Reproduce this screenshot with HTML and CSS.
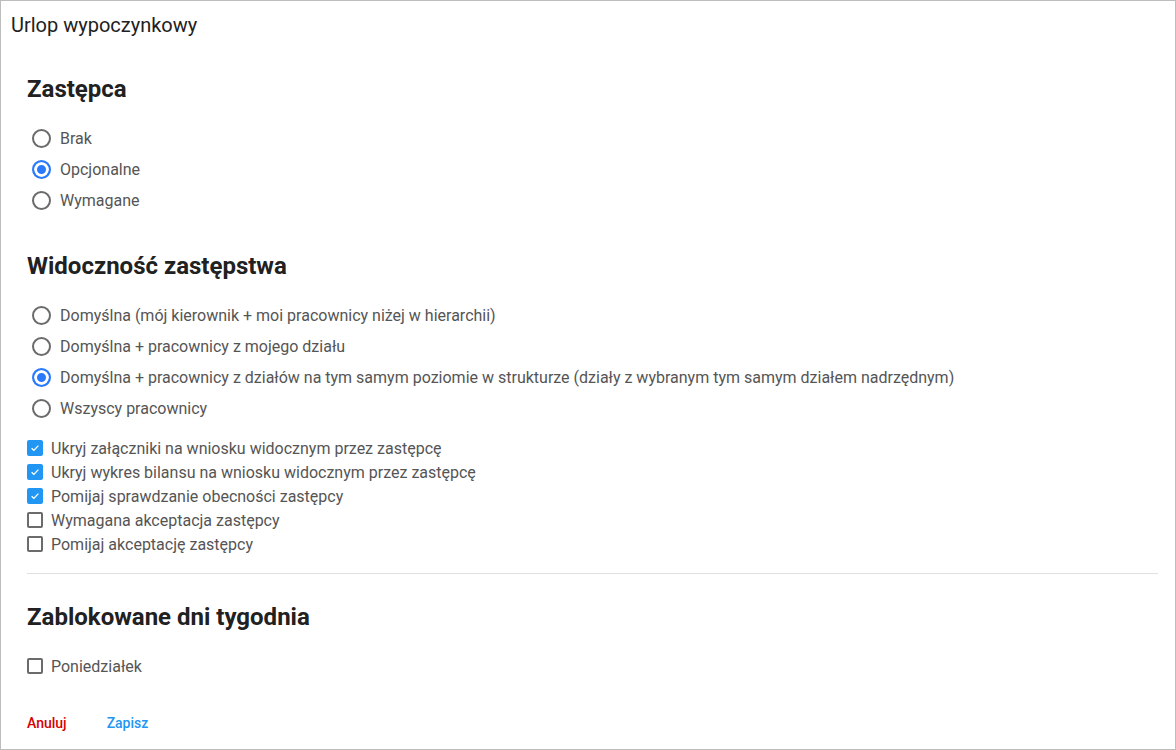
FILE: index.html
```html
<!DOCTYPE html>
<html lang="pl">
<head>
  <meta charset="UTF-8" />
  <meta name="viewport" content="width=device-width, initial-scale=1.0"/>
  <title>Urlop wypoczynkowy</title>
  <link rel="stylesheet" href="styles.css">
</head>
<body>

<div class="card">
  <div class="card-title">Urlop wypoczynkowy</div>

  <div class="card-body">
    <h2 class="first">Zastępca</h2>
    <div class="radio-group">
      <label class="radio"><input type="radio" name="zastepca"><span>Brak</span></label>
      <label class="radio"><input type="radio" name="zastepca" checked><span>Opcjonalne</span></label>
      <label class="radio"><input type="radio" name="zastepca"><span>Wymagane</span></label>
    </div>

    <h2>Widoczność zastępstwa</h2>
    <div class="radio-group">
      <label class="radio"><input type="radio" name="widocznosc"><span>Domyślna (mój kierownik + moi pracownicy niżej w hierarchii)</span></label>
      <label class="radio"><input type="radio" name="widocznosc"><span>Domyślna + pracownicy z mojego działu</span></label>
      <label class="radio"><input type="radio" name="widocznosc" checked><span>Domyślna + pracownicy z działów na tym samym poziomie w strukturze (działy z wybranym tym samym działem nadrzędnym)</span></label>
      <label class="radio"><input type="radio" name="widocznosc"><span>Wszyscy pracownicy</span></label>
    </div>

    <div class="check-group">
      <label class="check"><input type="checkbox" checked><span class="box"><svg viewBox="0 0 16 16"><path d="M3.5 8.2l3 3 6-6.4"/></svg></span><span>Ukryj załączniki na wniosku widocznym przez zastępcę</span></label>
      <label class="check"><input type="checkbox" checked><span class="box"><svg viewBox="0 0 16 16"><path d="M3.5 8.2l3 3 6-6.4"/></svg></span><span>Ukryj wykres bilansu na wniosku widocznym przez zastępcę</span></label>
      <label class="check"><input type="checkbox" checked><span class="box"><svg viewBox="0 0 16 16"><path d="M3.5 8.2l3 3 6-6.4"/></svg></span><span>Pomijaj sprawdzanie obecności zastępcy</span></label>
      <label class="check"><input type="checkbox"><span class="box"><svg viewBox="0 0 16 16"><path d="M3.5 8.2l3 3 6-6.4"/></svg></span><span>Wymagana akceptacja zastępcy</span></label>
      <label class="check"><input type="checkbox"><span class="box"><svg viewBox="0 0 16 16"><path d="M3.5 8.2l3 3 6-6.4"/></svg></span><span>Pomijaj akceptację zastępcy</span></label>
    </div>

    <hr>

    <h2 class="after-hr">Zablokowane dni tygodnia</h2>
    <div class="check-group days">
      <label class="check"><input type="checkbox"><span class="box"><svg viewBox="0 0 16 16"><path d="M3.5 8.2l3 3 6-6.4"/></svg></span><span>Poniedziałek</span></label>
    </div>

    <div class="actions">
      <button type="button" class="btn-cancel">Anuluj</button>
      <button type="button" class="btn-save">Zapisz</button>
    </div>
  </div>
</div>

</body>
</html>
```

FILE: styles.css
```css
:root {
  --color-texto: #555555;
  --color-titulo: #212121;
  --color-azul: #2979ff;
  --color-check: #2196f3;
  --color-borde: #bdbdbd;
}

body {
  font-family: Roboto, "Liberation Sans", sans-serif;
  margin: 0;
  padding: 0;
  background-color: white;
}

.card {
  width: 1176px;
  height: 750px;
  box-sizing: border-box;
  border: 1px solid var(--color-borde);
  background-color: white;
}

.card-title {
  font-size: 20px;
  line-height: 24px;
  color: var(--color-titulo);
  padding: 12px 10px 0;
}

.card-body {
  padding: 0 17px 0 26px;
}

h2 {
  font-size: 24px;
  font-weight: 700;
  line-height: 30px;
  color: var(--color-titulo);
  margin: 35px 0 19px;
}

h2.first {
  margin-top: 37px;
}

h2.after-hr {
  margin-top: 28px;
  margin-bottom: 22px;
}

.radio {
  display: flex;
  align-items: center;
  height: 31px;
  font-size: 16px;
  color: var(--color-texto);
  cursor: pointer;
}

.radio input {
  appearance: none;
  -webkit-appearance: none;
  width: 19px;
  height: 19px;
  margin: 0 9px 0 5px;
  border: 2px solid #6b6b6b;
  border-radius: 50%;
  box-sizing: border-box;
  flex-shrink: 0;
}

.radio input:checked {
  border-color: var(--color-azul);
  background-color: var(--color-azul);
  box-shadow: inset 0 0 0 3px white;
}

.check-group {
  margin-top: 12px;
}

.check {
  display: flex;
  align-items: center;
  height: 24px;
  font-size: 16px;
  color: var(--color-texto);
  cursor: pointer;
}

.check input {
  display: none;
}

.check .box {
  width: 16px;
  height: 16px;
  margin: 0 8px 0 0;
  border: 2px solid #6b6b6b;
  border-radius: 2px;
  box-sizing: border-box;
  display: flex;
  align-items: center;
  justify-content: center;
  flex-shrink: 0;
}

.check .box svg {
  width: 14px;
  height: 14px;
  fill: none;
  stroke: white;
  stroke-width: 1.8;
  display: none;
}

.check input:checked + .box {
  background-color: var(--color-check);
  border-color: var(--color-check);
}

.check input:checked + .box svg {
  display: block;
}

hr {
  border: none;
  border-top: 1px solid #e0e0e0;
  margin: 17px 0 0;
}

.days {
  margin-top: 0;
}

.actions {
  display: flex;
  gap: 40px;
  margin-top: 35px;
}

.actions button {
  background: none;
  border: none;
  padding: 0;
  font-family: Roboto, "Liberation Sans", sans-serif;
  font-size: 14px;
  font-weight: 500;
  line-height: 20px;
  cursor: pointer;
}

.btn-cancel {
  color: #d50000;
}

.btn-save {
  color: var(--color-check);
}
```
